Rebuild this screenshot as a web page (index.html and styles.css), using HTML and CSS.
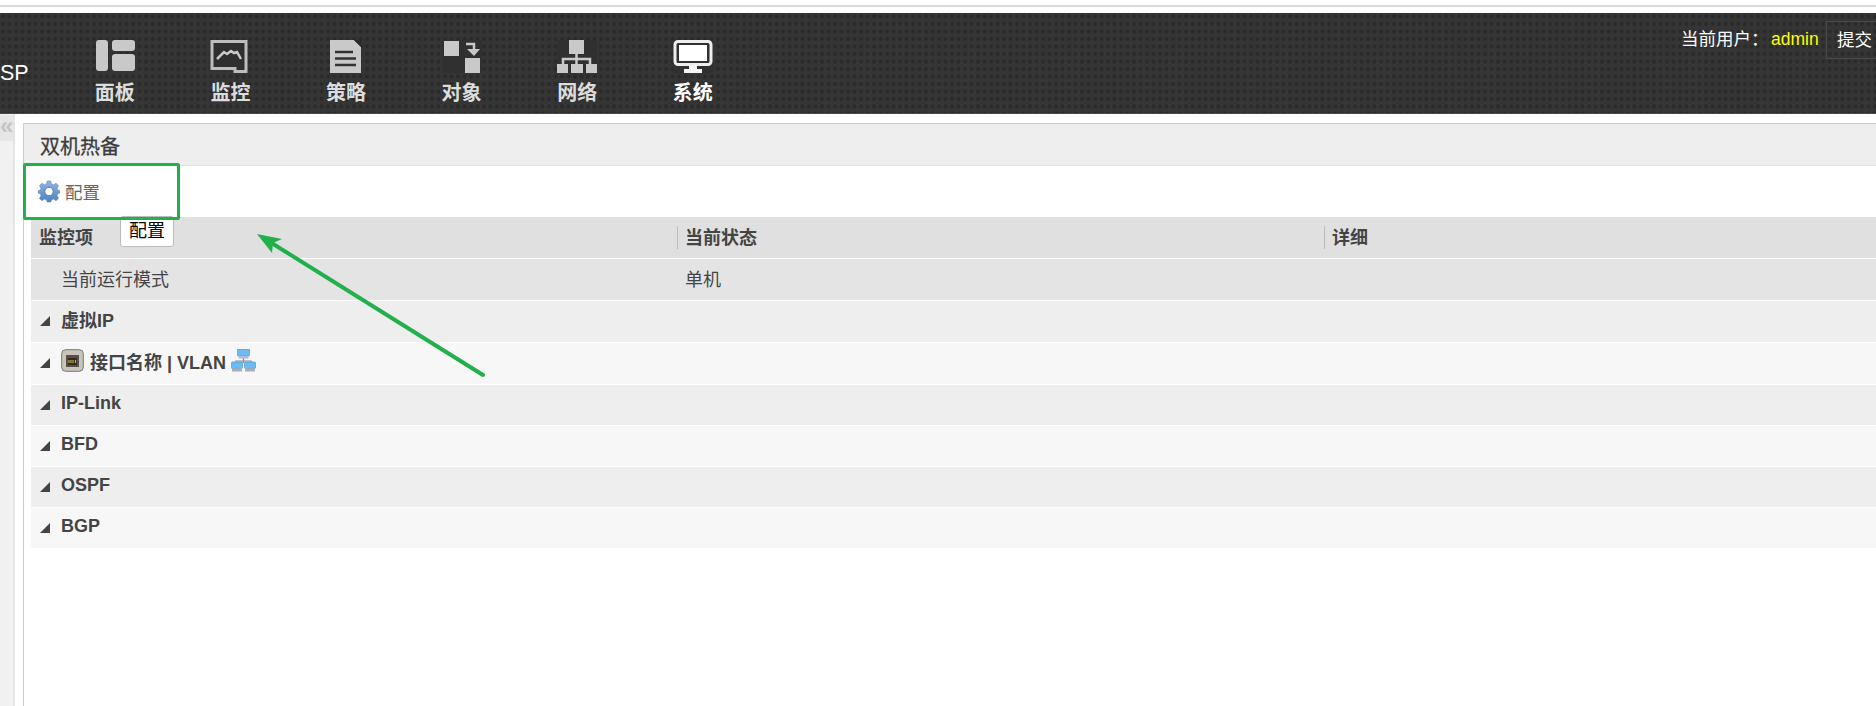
FILE: index.html
```html
<!DOCTYPE html>
<html lang="en">
<head>
    <meta charset="UTF-8">
    <title>双机热备</title>
    <link rel="stylesheet" href="styles.css">
</head>
<body>
<div class="topstrip"></div>

<div class="header">
    <div class="logo">SP</div>
    <ul class="nav">
        <li>
            <svg width="40" height="33" viewBox="0 0 40 33">
                <rect x="1" y="0" width="12" height="31" rx="3" fill="#c9c9c9"/>
                <rect x="17" y="0" width="23" height="11" rx="3" fill="#c9c9c9"/>
                <rect x="17" y="14" width="23" height="17" rx="3" fill="#c9c9c9"/>
            </svg>
            <span>面板</span>
        </li>
        <li>
            <svg width="40" height="33" viewBox="0 0 40 33">
                <path d="M2 1.500H36V31.500H25V28.500H2Z" fill="#2f2f2f" stroke="#bdbdbd" stroke-width="3"/>
                <path d="M7 19L14 12L17 14L21 11L24 13L27 12L31 19" fill="none" stroke="#c9c9c9" stroke-width="2.500"/>
            </svg>
            <span>监控</span>
        </li>
        <li>
            <svg width="40" height="33" viewBox="0 0 40 33">
                <path d="M4 0H28L35 7V33H4Z" fill="#c9c9c9"/>
                <path d="M28 0L35 7V0Z" fill="#2a2a2a"/>
                <path d="M9 12H27M9 18.500H30M9 25H30" stroke="#333" stroke-width="2.500"/>
            </svg>
            <span>策略</span>
        </li>
        <li>
            <svg width="40" height="33" viewBox="0 0 40 33">
                <rect width="40" height="33" fill="#303030"/>
                <rect x="2" y="1" width="15" height="15" fill="#c9c9c9"/>
                <rect x="23" y="18" width="15" height="15" fill="#c9c9c9"/>
                <path d="M24 4H32V10" fill="none" stroke="#c9c9c9" stroke-width="2.500"/>
                <path d="M25 9H38L32 16Z" fill="#c9c9c9"/>
            </svg>
            <span>对象</span>
        </li>
        <li>
            <svg width="40" height="33" viewBox="0 0 40 33">
                <rect width="40" height="33" fill="#303030"/>
                <rect x="12" y="0" width="15" height="14" fill="#c9c9c9"/>
                <path d="M19.500 14V24M6 24V19H33V24" fill="none" stroke="#c9c9c9" stroke-width="2.500"/>
                <rect x="0" y="24" width="11" height="9" fill="#c9c9c9"/>
                <rect x="14" y="24" width="12" height="9" fill="#c9c9c9"/>
                <rect x="29" y="24" width="11" height="9" fill="#c9c9c9"/>
            </svg>
            <span>网络</span>
        </li>
        <li class="active">
            <svg width="40" height="33" viewBox="0 0 40 33">
                <rect width="40" height="33" fill="#303030"/>
                <rect x="2" y="1.500" width="36" height="23" rx="3" fill="#303030" stroke="#eee" stroke-width="3"/>
                <rect x="6" y="5" width="28" height="16" fill="#fff"/>
                <path d="M16 25H24V29H29V33H11V29H16Z" fill="#f4f4f4"/>
            </svg>
            <span>系统</span>
        </li>
    </ul>
    <div class="user">
        <span class="user-label">当前用户：</span>
        <span class="user-name">admin</span>
        <span class="submit">提交</span>
    </div>
</div>

<div class="main">
    <div class="side"><div class="side-toggle">«</div></div>
    <div class="panel">
        <div class="panel-title">双机热备</div>
        <div class="toolbar">
            <svg class="gear" width="22" height="23" viewBox="0 0 24 25">
                <defs>
                    <linearGradient id="gearFill" x1="0" y1="0" x2="0" y2="1">
                        <stop offset="0" stop-color="#8fb6e2"/>
                        <stop offset="1" stop-color="#4f80bd"/>
                    </linearGradient>
                </defs>
                <path d="M10 1H14L14.600 4.200L17 5.200L19.700 3.400L22.500 6.200L20.700 8.900L21.700 11.200L24 11.800V14.200L21.700 14.800L20.700 17.100L22.500 19.800L19.700 22.600L17 20.800L14.600 21.800L14 24H10L9.400 21.800L7 20.800L4.300 22.600L1.500 19.800L3.300 17.100L2.300 14.800L0 14.200V11.800L2.300 11.200L3.300 8.900L1.500 6.200L4.300 3.400L7 5.200L9.400 4.200Z" fill="url(#gearFill)" stroke="#5c86b8" stroke-width=".6"/>
                <circle cx="12" cy="12.500" r="4.600" fill="#fff" stroke="#4a78b0" stroke-width="1"/>
            </svg>
            <span>配置</span>
        </div>
        <div class="tip">配置</div>
        <div class="grid">
            <div class="row head">
                <div class="cell first">监控项</div>
                <div class="cell">当前状态</div>
                <div class="cell">详细</div>
            </div>
            <div class="row mode">
                <div class="cell first indent">当前运行模式</div>
                <div class="cell">单机</div>
                <div class="cell"></div>
            </div>
            <div class="group odd tall"><i class="arrow"></i>虚拟IP</div>
            <div class="group tall">
                <i class="arrow"></i>
                <svg class="port" width="23" height="23" viewBox="0 0 23 23">
                    <rect x=".7" y=".7" width="21.600" height="21.600" rx="4" fill="#c9c5bc" stroke="#777"/>
                    <rect x="5" y="6" width="13" height="12" fill="#56524a"/>
                    <rect x="7" y="9" width="9" height="7" fill="#2e2c28"/>
                    <path d="M8 11V14M10 11V14M12 11V14M14.500 11V14" stroke="#c8a83c" stroke-width="1.200"/>
                </svg>
                <span>接口名称 | VLAN</span>
                <svg class="lan" width="25" height="23" viewBox="0 0 25 23">
                    <path d="M12.500 9V14M5 15V12H20V15" fill="none" stroke="#7a8fa8" stroke-width="1.200"/>
                    <rect x="6.500" y="0" width="12" height="7" rx="1" fill="#6bbcf2" stroke="#4f86b8" stroke-width=".6"/>
                    <rect x="7.500" y="7" width="10" height="2.500" fill="#b5bcc8"/>
                    <rect x="0.500" y="13" width="11" height="6.500" rx="1" fill="#6bbcf2" stroke="#4f86b8" stroke-width=".6"/>
                    <rect x="1" y="19.500" width="10" height="3" fill="#a8b0bd"/>
                    <rect x="13.500" y="13" width="11" height="6.500" rx="1" fill="#6bbcf2" stroke="#4f86b8" stroke-width=".6"/>
                    <rect x="14" y="19.500" width="10" height="3" fill="#a8b0bd"/>
                </svg>
            </div>
            <div class="group odd"><i class="arrow"></i>IP-Link</div>
            <div class="group"><i class="arrow"></i>BFD</div>
            <div class="group odd"><i class="arrow"></i>OSPF</div>
            <div class="group"><i class="arrow"></i>BGP</div>
        </div>
    </div>
</div>

<!-- green marks drawn over the screenshot -->
<div class="mark-box"></div>
<svg class="mark-arrow" width="1876" height="706" viewBox="0 0 1876 706">
    <path d="M483 375L270 242" stroke="#21b04b" stroke-width="4" stroke-linecap="round" fill="none"/>
    <path d="M257 234L282 239L273 243L272 253Z" fill="#21b04b"/>
</svg>
</body>
</html>
```
FILE: styles.css
```css
*{
    margin: 0;
    padding: 0;
    box-sizing: border-box;
}
html, body{
    width: 1876px;
    height: 706px;
    overflow: hidden;
}
body{
    position: relative;
    background: #fff;
    font-family: "Liberation Sans", "Noto Sans CJK SC", sans-serif;
    font-size: 18px;
    color: #444;
}
.topstrip{
    height: 13px;
    padding-top: 5px;
    background: #fff;
}
.topstrip::before{
    content: "";
    display: block;
    height: 2px;
    background: #d9d9d9;
}
.header{
    height: 101px;
    display: flex;
    background-color: #353535;
    background-image: radial-gradient(circle at 3px 3.5px, #2a2a2a 1.4px, transparent 2.6px);
    background-size: 6.5px 7.5px;
    border-bottom: 1px solid #6e3a36;
}
.logo{
    flex: none;
    width: 57px;
    padding-top: 47px;
    font-size: 21.5px;
    line-height: 27px;
    color: #fff;
}
.nav{
    list-style: none;
    display: flex;
    padding-top: 27px;
}
.nav li{
    width: 115.6px;
    display: flex;
    flex-direction: column;
    align-items: center;
    color: #ddd;
}
.nav span{
    margin-top: 8px;
    font-size: 20px;
    line-height: 24px;
    font-weight: bold;
}
.nav .active{
    color: #fff;
}
.user{
    margin-left: auto;
    display: flex;
    align-items: flex-start;
    color: #fff;
    padding-top: 8px;
    font-size: 17.5px;
}
.user-label{
    width: 90px;
    line-height: 37px;
}
.user-name{
    width: 55px;
    line-height: 37px;
    color: #ff0;
}
.submit{
    width: 50px;
    height: 38px;
    line-height: 36px;
    padding-left: 10px;
    border: 1px solid #4a4a4a;
    border-right: 0;
    white-space: nowrap;
}
.main{
    display: flex;
    height: 592px;
}
.side{
    flex: none;
    width: 15px;
    background: #f1f1f1;
    border-right: 2px solid #e4e4e4;
}
.side-toggle{
    height: 26px;
    margin-top: 1px;
    background: #e6e6e6;
    color: #c4c4c4;
    font-size: 24px;
    font-weight: bold;
    line-height: 22px;
    text-align: center;
}
.panel{
    flex: 1;
    min-width: 0;
    position: relative;
    margin: 9px 0 0 8px;
    border: 1px solid #ccc;
    border-width: 1px 0 0 1px;
}
.panel-title{
    height: 42px;
    line-height: 46px;
    padding-left: 16px;
    font-size: 20px;
    color: #3c3c3c;
    -webkit-text-stroke: .3px #3c3c3c;
    background: #eee;
    border-bottom: 1px solid #e2e2e2;
}
.toolbar{
    height: 51px;
    display: flex;
    align-items: center;
    padding-left: 14px;
    background: #fff;
    font-size: 17.5px;
    color: #666;
}
.toolbar span{
    margin-left: 5px;
}
.tip{
    position: absolute;
    left: 96px;
    top: 92px;
    width: 54px;
    height: 31px;
    z-index: 2;
    text-align: center;
    line-height: 28px;
    color: #000;
    background: #fff;
    border: 1px solid #bbb;
    border-radius: 3px;
}
.grid{
    margin-left: 7px;
}
.row{
    display: flex;
    height: 42px;
    border-bottom: 1px solid #fff;
}
.cell{
    flex: none;
    width: 647px;
    line-height: 42px;
    padding-left: 8px;
    position: relative;
}
.cell.first{
    width: 646px;
}
.cell:last-child{
    flex: 1;
    width: auto;
}
.head{
    background: #e0e0e0;
    font-weight: bold;
}
.head .cell + .cell::before{
    content: "";
    position: absolute;
    left: 0;
    top: 9px;
    height: 23px;
    border-left: 1px solid #bbb;
}
.mode{
    background: #e4e4e4;
}
.cell.indent{
    padding-left: 30px;
}
.group{
    height: 41px;
    display: flex;
    align-items: center;
    padding: 0 0 4px 9px;
    font-weight: bold;
    background: #f7f7f7;
    border-bottom: 1px solid #fff;
}
.group.tall{
    height: 42px;
    padding-bottom: 6px;
}
.group.odd{
    background: #eee;
}
.arrow{
    width: 0;
    height: 0;
    margin-right: 11px;
    margin-top: 4px;
    border-style: solid;
    border-width: 0 0 10px 10px;
    border-color: transparent transparent #444 transparent;
}
.port{
    margin-right: 6px;
}
.lan{
    margin-left: 5px;
}
.mark-box{
    position: absolute;
    left: 23px;
    top: 163px;
    width: 157px;
    height: 57px;
    border: 3px solid #21b04b;
    border-radius: 2px;
    z-index: 3;
}
.mark-arrow{
    position: absolute;
    left: 0;
    top: 0;
    z-index: 3;
}
```
